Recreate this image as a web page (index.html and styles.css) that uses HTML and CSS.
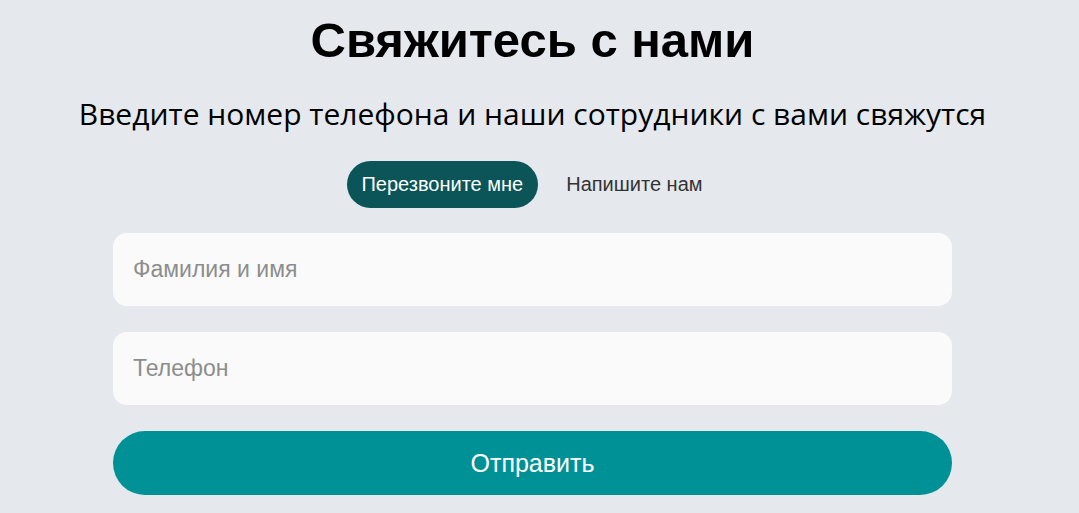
FILE: index.html
```html
<!DOCTYPE html>
<html lang="ru">
<head>
<meta charset="utf-8">
<title>Свяжитесь с нами</title>
<link rel="stylesheet" href="styles.css">
</head>
<body>
<main class="contact">
  <h1 class="contact__title">Свяжитесь с нами</h1>
  <p class="contact__subtitle">Введите номер телефона и наши сотрудники с вами свяжутся</p>
  <div class="tabs">
    <button class="tab tab--active" type="button">Перезвоните мне</button>
    <button class="tab" type="button">Напишите нам</button>
  </div>
  <form class="form">
    <input class="form__input" type="text" placeholder="Фамилия и имя">
    <input class="form__input" type="tel" placeholder="Телефон">
    <button class="form__submit" type="button">Отправить</button>
  </form>
</main>
</body>
</html>
```
FILE: styles.css
```css
html, body {
  margin: 0;
  padding: 0;
}
body {
  background: #e5e8ed;
  font-family: "Liberation Sans", Arial, sans-serif;
  color: #000;
}
.contact {
  display: flex;
  flex-direction: column;
  align-items: center;
  padding: 10px 14px 0 0;
}
.contact__title {
  margin: 0;
  font-size: 49px;
  font-weight: 700;
  line-height: 60px;
}
.contact__subtitle {
  margin: 24px 0 0;
  font-family: "Open Sans", sans-serif;
  font-size: 30px;
  line-height: 40px;
}
.tabs {
  display: flex;
  gap: 0;
  margin-top: 27px;
}
.tab {
  border: none;
  background: transparent;
  font-family: "Liberation Sans", Arial, sans-serif;
  font-size: 20px;
  color: #333;
  height: 47px;
  padding: 0 15px 0 14px;
  border-radius: 24px;
}
.tab + .tab {
  margin-left: 14px;
}
.tab--active {
  background: #0b5558;
  color: #fff;
}
.form {
  display: flex;
  flex-direction: column;
  gap: 26px;
  width: 839px;
  margin-top: 25px;
}
.form__input {
  height: 73px;
  box-sizing: border-box;
  border: none;
  border-radius: 14px;
  background: #fafafa;
  padding: 0 20px;
  font-family: "Liberation Sans", Arial, sans-serif;
  font-size: 23px;
  color: #333;
  outline: none;
}
.form__input::placeholder {
  color: #8d8d8d;
}
.form__submit {
  height: 64px;
  border: none;
  border-radius: 32px;
  background: #009196;
  color: #fff;
  font-family: "Liberation Sans", Arial, sans-serif;
  font-size: 25px;
}
```
